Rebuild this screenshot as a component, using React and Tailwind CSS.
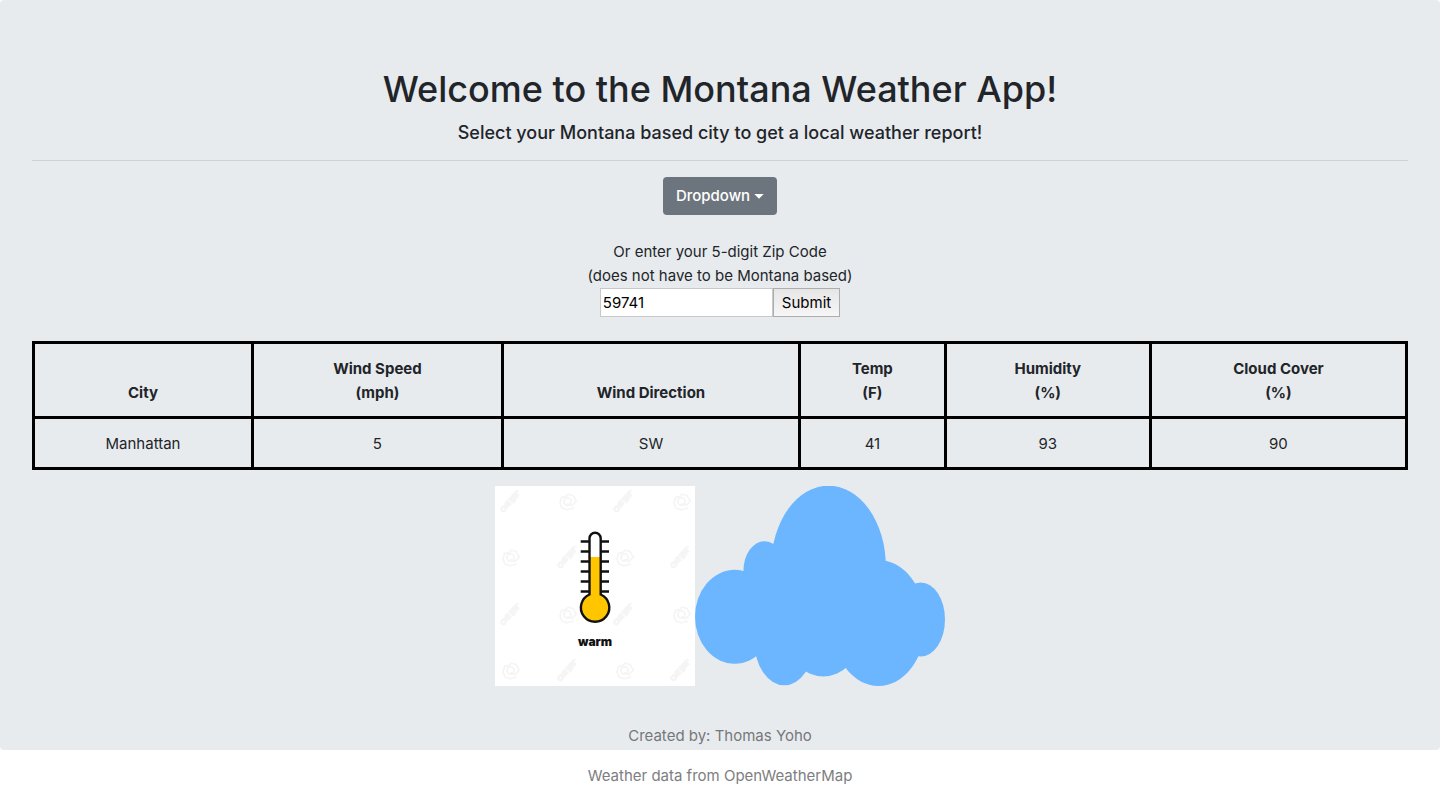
import React from "react";

const columns = [
  { title: "City", width: "w-[15.95%]" },
  { title: "Wind Speed", unit: "(mph)", width: "w-[18.2%]" },
  { title: "Wind Direction", width: "w-[21.65%]" },
  { title: "Temp", unit: "(F)", width: "w-[10.6%]" },
  { title: "Humidity", unit: "(%)", width: "w-[14.95%]" },
  { title: "Cloud Cover", unit: "(%)", width: "w-[18.65%]" },
];

const report = ["Manhattan", "5", "SW", "41", "93", "90"];

const stripes = [
  [15, 16], [128, 16], [72, 72], [185, 72],
  [15, 129], [128, 129], [72, 185], [185, 185],
];

const badges = [
  [73, 16], [187, 16], [16, 72], [130, 72],
  [73, 129], [187, 129], [16, 185], [130, 185],
];

const ticks = [55, 65, 75, 85, 95, 105];

function Thermometer() {
  return (
    <svg viewBox="0 0 200 200" className="h-[200px] w-[200px] bg-white" role="img" aria-label="warm">
      <g fill="none" stroke="#f5f5f5">
        {stripes.map(([x, y]) => (
          <g key={`${x}-${y}`} transform={`translate(${x} ${y}) rotate(-47)`}>
            <circle cx="-9.500" cy="0" r="2.200" strokeWidth="2.4" />
            <path d="M-6 -2.500v5M-3.500 2.500v-5h2.500v2.500l-2 .5l2.500 2M1 -2.500h3v5h-3M1 0h3M6 2.500v-5h2.500v2.500h-2.500l2.500 2.500M10.500 2.500v-5h2" strokeWidth="2.4" />
            <circle cx="13.500" cy="-2" r=".6" />
          </g>
        ))}
        {badges.map(([x, y]) => (
          <g key={`${x}-${y}`} transform={`translate(${x} ${y})`} strokeWidth="1.8">
            <path d="M6 6L-1 7.800L-6 6L-8 1L-6.500 -4.500L-2 -5.500L0 -7.800L5 -6.500L8.300 -1L4 3.500L-1 1.500" />
            <circle cx="-.5" cy="-.5" r="3.600" />
          </g>
        ))}
      </g>
      <path
        d="M94.500 108.500V52.400a5.600 5.600 0 0 1 11.200 0V108.500A14.200 14.200 0 1 1 94.500 108.500Z"
        fill="#fff"
      />
      <path d="M94.500 71H105.700V108.500A14.200 14.200 0 1 1 94.500 108.500Z" fill="#ffc600" />
      <path
        d="M94.500 108.500V52.400a5.600 5.600 0 0 1 11.200 0V108.500A14.200 14.200 0 1 1 94.500 108.500Z"
        fill="none"
        stroke="#111"
        strokeWidth="2.400"
      />
      <g stroke="#111" strokeWidth="2.400">
        {ticks.map((y) => (
          <path key={y} d={`M85.700 ${y + 0.5}H94.500M105.800 ${y + 0.5}H114`} />
        ))}
      </g>
      <text x="100" y="160" textAnchor="middle" fill="#111" className="font-[Inter,sans-serif] text-[12px] font-black">
        warm
      </text>
    </svg>
  );
}

function Cloud() {
  return (
    <svg viewBox="0 0 250 200" className="h-[200px] w-[250px]" role="img" aria-label="Cloudy" fill="#6cb6ff">
      <ellipse cx="39.700" cy="130.800" rx="39.700" ry="47" />
      <ellipse cx="69.500" cy="84.500" rx="21" ry="29.300" />
      <ellipse cx="133.500" cy="80" rx="57.300" ry="80.300" />
      <ellipse cx="183.500" cy="137" rx="47" ry="63" />
      <ellipse cx="225.700" cy="133.500" rx="24.300" ry="37" />
      <ellipse cx="89.300" cy="155" rx="30" ry="44.300" />
      <ellipse cx="128.300" cy="152.500" rx="36" ry="38" />
      <path d="M50 86L80 60L190 78L218 98L222 168L151 179L111 183L62 170L35 130Z" />
    </svg>
  );
}

export default function App() {
  return (
    <div className="bg-white text-center font-[Inter,'Liberation_Sans',sans-serif] text-[15px] leading-6 text-[#212529]">
      <main className="rounded bg-[#e8ebee] px-8 pt-[65px] pb-[2px]">
        <h1 className="mb-2 text-4xl leading-12 font-medium">Welcome to the Montana Weather App!</h1>
        <h2 className="text-lg leading-6 font-medium">
          Select your Montana based city to get a local weather report!
        </h2>
        <hr className="mt-[15px] mb-4 border-t border-[#cfd2d5]" />

        <button
          type="button"
          aria-haspopup="menu"
          className="inline-flex h-[38px] items-center gap-1 rounded bg-[#6c757d] px-[13px] align-top font-medium text-white"
        >
          Dropdown
          <svg viewBox="0 0 10 5" className="h-[5px] w-[10px]" fill="currentColor" aria-hidden="true">
            <path d="M.3 0H9.700L5 4.800Z" />
          </svg>
        </button>

        <form className="mt-[25px] flex flex-col items-center" onSubmit={(event) => event.preventDefault()}>
          <label htmlFor="zip">
            Or enter your 5-digit Zip Code
            <br />
            (does not have to be Montana based)
          </label>
          <div className="flex items-end">
            <input
              id="zip"
              type="text"
              defaultValue="59741"
              className="h-[29px] w-[173px] border border-[#c8c8c8] bg-white px-[2px] text-black outline-none"
            />
            <button
              type="submit"
              className="h-[29px] border border-[#adadad] bg-linear-to-b from-[#e6e6e6] to-[#f6f6f6] px-2 text-black"
            >
              Submit
            </button>
          </div>
        </form>

        <table className="mt-6 mb-4 w-full table-fixed border-collapse border-3 border-black">
          <thead>
            <tr>
              {columns.map(({ title, unit, width }) => (
                <th key={title} scope="col" className={`${width} border-3 border-black px-3 pt-[13px] pb-[11px] align-bottom font-bold`}>
                  {title}
                  {unit && (
                    <>
                      <br />
                      {unit}
                    </>
                  )}
                </th>
              ))}
            </tr>
          </thead>
          <tbody>
            <tr>
              {report.map((value, index) => (
                <td key={columns[index].title} className="border-3 border-black px-3 pt-[13px] pb-[11px]">
                  {value}
                </td>
              ))}
            </tr>
          </tbody>
        </table>

        <div className="flex justify-center">
          <Thermometer />
          <Cloud />
        </div>

        <p className="mt-[38px] text-[#75787b]">Created by: Thomas Yoho</p>
      </main>
      <footer className="pt-[14px] pb-3 text-[#7d7e80]">Weather data from OpenWeatherMap</footer>
    </div>
  );
}
